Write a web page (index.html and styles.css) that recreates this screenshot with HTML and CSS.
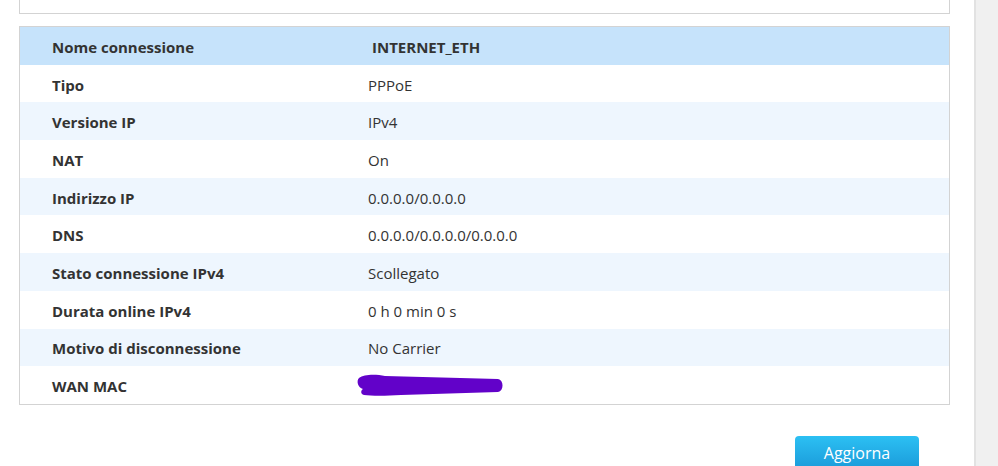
FILE: index.html
```html
<!DOCTYPE html>
<html lang="it">
<head>
    <meta charset="UTF-8">
    <title>Stato WAN</title>
    <link rel="stylesheet" href="styles.css">
</head>
<body>
    <div class="page">
        <div class="content">
            <div class="top-box"></div>

            <!-- Informazioni connessione WAN -->
            <div class="info-table">
                <div class="row head"><span class="label">Nome connessione</span><span class="value">INTERNET_ETH</span></div>
                <div class="row"><span class="label">Tipo</span><span class="value">PPPoE</span></div>
                <div class="row alt"><span class="label">Versione IP</span><span class="value">IPv4</span></div>
                <div class="row"><span class="label">NAT</span><span class="value">On</span></div>
                <div class="row alt"><span class="label">Indirizzo IP</span><span class="value">0.0.0.0/0.0.0.0</span></div>
                <div class="row"><span class="label">DNS</span><span class="value">0.0.0.0/0.0.0.0/0.0.0.0</span></div>
                <div class="row alt"><span class="label">Stato connessione IPv4</span><span class="value">Scollegato</span></div>
                <div class="row"><span class="label">Durata online IPv4</span><span class="value">0 h 0 min 0 s</span></div>
                <div class="row alt"><span class="label">Motivo di disconnessione</span><span class="value">No Carrier</span></div>
                <div class="row"><span class="label">WAN MAC</span><span class="value">
                    <svg class="scribble" width="150" height="24" viewBox="0 0 150 24">
                        <path d="M3 5 C 8 1, 20 1, 29 3 L 142 6 C 148 7, 148 18, 142 19 L 45 22 C 30 23, 15 23, 8 22 C 4 21, 5 17, 7 16 C 2 15, 0 8, 3 5 Z" fill="#6202c9"/>
                    </svg>
                </span></div>
            </div>

            <div class="actions">
                <button class="btn">Aggiorna</button>
            </div>
        </div>
        <div class="scrollbar"></div>
    </div>
</body>
</html>
```

FILE: styles.css
```css
body { margin: 0; padding: 0; font-family: "Open Sans", "Noto Sans", Arial, sans-serif; color: #333; background: #fff; overflow: hidden; }
.page { display: flex; height: 466px; }
.content { width: 974px; padding-left: 19px; box-sizing: border-box; }
.scrollbar { flex: 1; background: #f0f0f0; border-left: 2px solid #e2e2e2; }
.top-box { width: 931px; height: 14px; border: 1px solid #d3d3d3; border-top: none; box-sizing: border-box; }
.info-table { width: 931px; margin-top: 12px; border: 1px solid #d3d3d3; box-sizing: border-box; }
.row { display: flex; align-items: center; height: 37.7px; padding-top: 2px; box-sizing: border-box; font-size: 15px; }
.row .label { width: 316px; padding-left: 32px; font-weight: bold; }
.row.head { background: #c6e3fb; }
.row.head .value { font-weight: bold; padding-left: 4px; }
.row.alt { background: #eef6fe; }
.scribble { display: block; margin-left: -12px; margin-top: -2px; }
.actions { display: flex; justify-content: flex-end; width: 931px; margin-top: 31px; }
.btn { width: 124px; height: 34px; margin-right: 31px; padding-top: 2px; border: none; border-radius: 4px; background: linear-gradient(#2cc0f3, #1a9ad9); color: #fff; font-family: inherit; font-size: 16px; cursor: pointer; }
```
